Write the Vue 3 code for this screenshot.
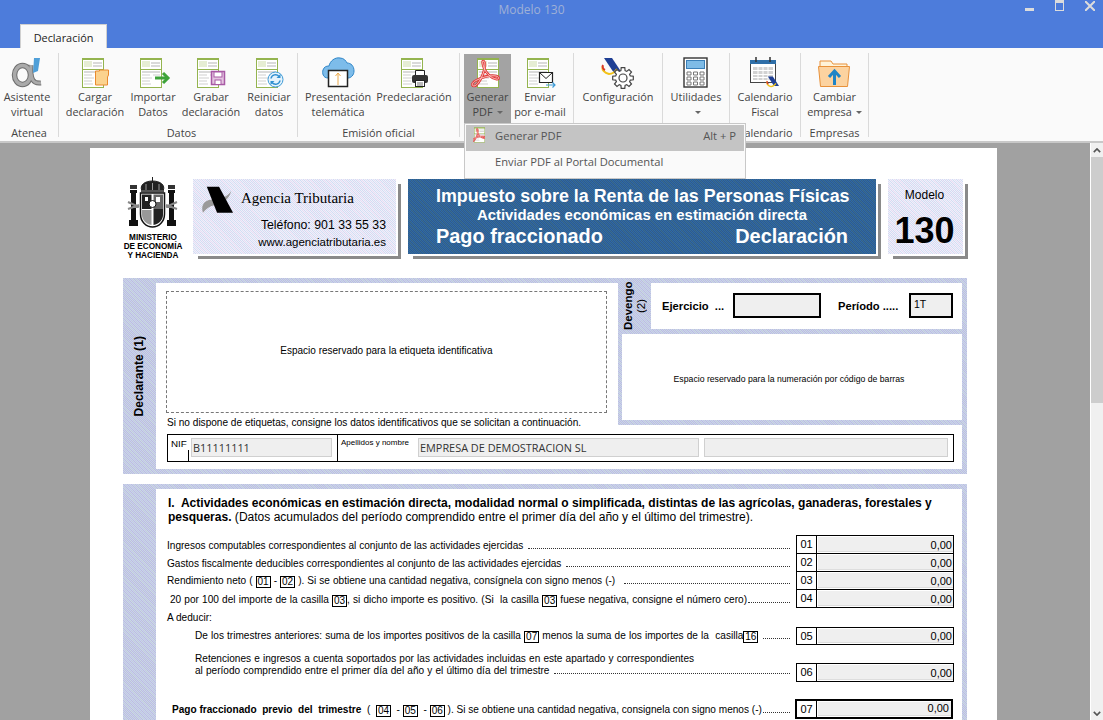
<template>
  <div class="app">
    <svg class="defs" width="0" height="0" aria-hidden="true">
      <defs>
        <symbol id="doc" viewBox="0 0 40 32">
          <rect x="9.5" y="1.5" width="21" height="29" fill="#fff" stroke="#94b44f" />
          <rect x="9" y="1" width="22" height="2" fill="#94b44f" />
          <rect x="11" y="4" width="8" height="6" fill="#e6edd4" />
          <path d="M20 6h9M20 9h9M11 15h18" stroke="#b5b5b5" />
          <path d="M11 18h8M22 18h7M11 21h10M11 24h8M11 27h9" stroke="#cfcfcf" />
          <rect x="9" y="12" width="22" height="1" fill="#94b44f" />
        </symbol>
        <symbol id="alpha" viewBox="0 0 40 32">
          <ellipse cx="15.500" cy="18" rx="8" ry="9.500" fill="none" stroke="#6e6e6e" stroke-width="5.500" />
          <path d="M24 8C23 22 26 27 34 26" fill="none" stroke="#6e6e6e" stroke-width="5" />
          <ellipse cx="15.500" cy="18" rx="8" ry="9.500" fill="none" stroke="#aaaaaa" stroke-width="3.500" />
          <path d="M24 8C23 22 26 27 34 26" fill="none" stroke="#aaaaaa" stroke-width="3" />
          <path d="M27 1h6l-2 13-5 2z" fill="#4f9fd8" />
        </symbol>
        <symbol id="cargar" viewBox="0 0 40 32">
          <use href="#doc" x="-2" />
          <path d="M20.500 14h4v-1h9v5l-1 2v8h-12z" fill="#fbd28e" stroke="#e98a2e" />
        </symbol>
        <symbol id="importar" viewBox="0 0 40 32">
          <use href="#doc" x="-2" />
          <path d="M22 21h11" stroke="#3ea33a" stroke-width="3" />
          <path d="M30 16l5 5-5 5" fill="none" stroke="#3ea33a" stroke-width="3" />
        </symbol>
        <symbol id="grabar" viewBox="0 0 40 32">
          <use href="#doc" x="-3" />
          <rect x="20.500" y="14.500" width="13" height="13" fill="#e4c4e0" stroke="#a85aa5" stroke-width="1.500" />
          <rect x="23" y="15" width="8" height="5" fill="#fff" stroke="#a85aa5" />
          <rect x="24" y="23" width="6" height="4.500" fill="#fff" stroke="#a85aa5" />
        </symbol>
        <symbol id="reiniciar" viewBox="0 0 40 32">
          <use href="#doc" x="-2" />
          <circle cx="26.500" cy="22.500" r="7.500" fill="#e5f3fc" stroke="#3d9ad6" />
          <path d="M22 21.500a4.500 4.500 0 0 1 8-2M31 23.500a4.500 4.500 0 0 1-8 2" fill="none" stroke="#2f8fd0" stroke-width="1.500" />
          <path d="M31.500 17v4h-4M21.500 28v-4h4" fill="#2f8fd0" />
        </symbol>
        <symbol id="nube" viewBox="0 0 40 32">
          <path d="M10 21C5 21 4 16 5 13c1-3 3-4 6-4 1-5 6-9 11-8 4 0 6 3 7 5 4 0 7 3 7 8 0 4-3 7-6 7z" fill="#7dbcea" stroke="#2f86c8" />
          <rect x="10.500" y="13.500" width="19" height="16" fill="#fff" stroke="#222" stroke-width="1.500" />
          <path d="M20 28V16M17.500 19l2.500-3 2.500 3" fill="none" stroke="#eba94a" />
        </symbol>
        <symbol id="imprimir" viewBox="0 0 40 32">
          <use href="#doc" x="-2" />
          <path d="M21.500 13.500h9v6h-9z" fill="#fff" stroke="#222" />
          <rect x="18" y="18" width="16" height="8" rx="2" fill="#333" />
          <rect x="21.500" y="23.500" width="9" height="6" fill="#fff" stroke="#222" />
          <path d="M23 26h6M23 28h6" stroke="#777" />
        </symbol>
        <symbol id="pdf" viewBox="0 0 40 32">
          <use href="#doc" />
          <path d="M15 4c3 0 2 8 0 13-2 5-6 12-9 12-3 0-2-4 3-6 6-3 14-5 19-4 4 1 3 4 0 3-5-1-10-6-12-11-1-3-2-7-1-7z" fill="none" stroke="#e23a3a" stroke-width="2.600" />
          <path d="M15 4c3 0 2 8 0 13-2 5-6 12-9 12-3 0-2-4 3-6 6-3 14-5 19-4 4 1 3 4 0 3-5-1-10-6-12-11-1-3-2-7-1-7z" fill="none" stroke="#f9c9c4" stroke-width=".9" />
        </symbol>
        <symbol id="enviar" viewBox="0 0 40 32">
          <use href="#doc" x="-2" />
          <path d="M19.500 15.500h13v10h-13z" fill="#fff" stroke="#222" stroke-width="1.200" />
          <path d="M19.500 15.500l6.500 6 6.500-6" fill="none" stroke="#222" />
          <path d="M26 28h9M32.500 25.500l2.500 2.500-2.500 2.500" fill="none" stroke="#3d9ad6" stroke-width="1.200" />
        </symbol>
        <symbol id="aeat" viewBox="0 0 40 32">
          <path d="M3 1h8l10 15h-8z" fill="#1f3f94" />
          <path d="M2 9c-2 4 2 7 6 8 3 0 6-2 8-5" fill="none" stroke="#f2c318" stroke-width="2" />
          <path d="M2 8c-1 2 0 4 2 5" fill="none" stroke="#d8382c" stroke-width="2" />
        </symbol>
        <symbol id="config" viewBox="0 0 40 32">
          <use href="#aeat" x="3" />
          <path :d="gearPath" fill="#fff" stroke="#444" stroke-width="1.200" />
          <circle cx="25" cy="21" r="4" fill="#fff" stroke="#444" stroke-width="1.200" />
        </symbol>
        <symbol id="calc" viewBox="0 0 40 32">
          <rect x="8" y="1" width="23" height="29" fill="#fff" stroke="#333" stroke-width="1.400" />
          <rect x="10.500" y="3.500" width="18" height="8" fill="#7ebbe6" stroke="#3a7fb8" />
          <path d="M11 15h4v3h-4zM17.500 15h4v3h-4zM24 15h4v3h-4zM11 20h4v3h-4zM17.500 20h4v3h-4zM24 20h4v3h-4zM11 25h4v3h-4zM17.500 25h4v3h-4zM24 25h4v3h-4z" fill="#fff" stroke="#777" />
        </symbol>
        <symbol id="calendario" viewBox="0 0 40 32">
          <rect x="5.500" y="3.500" width="25" height="22" fill="#fff" stroke="#444" />
          <rect x="5" y="3" width="26" height="4" fill="#2f6fa8" />
          <path d="M11 0v5M25 0v5" stroke="#333" stroke-width="1.500" />
          <path d="M8 10h20v13H8z" fill="#d2d2d2" />
          <path d="M8 13.500h20M8 17.500h20M8 20.500h20M13 10v13M18 10v13M23 10v13" stroke="#fff" />
          <g transform="translate(21 19) scale(.62)"><use href="#aeat" width="40" height="32" /></g>
        </symbol>
        <symbol id="carpeta" viewBox="0 0 40 32">
          <path d="M5 9V4h11l2 3h14v3" fill="#fff3d8" stroke="#e8913a" />
          <path d="M3.500 9.500h31l-2 20h-27z" fill="#fcd3a0" stroke="#e8913a" />
          <path d="M19.500 28V14M14 20l5.500-6 5.500 6" fill="none" stroke="#1f84c6" stroke-width="3" />
        </symbol>
        <symbol id="escudo" viewBox="0 0 52 52">
          <path d="M25.500 0v5M15 14c-3-6 3-10 10.500-10S39 8 36 14z" fill="#222" stroke="#222" />
          <path d="M19 7v6M25.500 6v7M32 7v6" stroke="#999" />
          <rect x="14" y="13" width="23" height="2.500" fill="#555" />
          <path d="M13.500 16h24v21c0 8-6 13-12 13s-12-5-12-13z" fill="#fff" stroke="#111" stroke-width="1.500" />
          <path d="M15 17.500h9.500V32H15zM26.500 32H36v6c0 5-4 9-9.500 10z" fill="#222" />
          <path d="M26.500 17.500H36V32h-9.500z" fill="#666" />
          <path d="M15 33h9.500v15C19 47 15 43 15 38z" fill="#999" />
          <path d="M18 20h3v4h-3zM29 20h4v5h-4z" fill="#fff" />
          <circle cx="25.500" cy="27" r="3.500" fill="#fff" stroke="#111" />
          <path d="M3 13h7v3H9v27h2v6H2v-6h2V16H3zM41 13h7v3h-1v27h2v6h-9v-6h2V16h-1z" fill="#111" />
          <path d="M3 8h7v4H3zM41 8h7v4h-7z" fill="#333" />
          <path d="M1 25l11 5M1 32l11-4M39 30l11-5M39 28l11 4" stroke="#888" stroke-width="2" />
        </symbol>
        <symbol id="at" viewBox="0 0 34 30">
          <path d="M31 5C29 14 21 19 13 20 8 21 4 24 1 28-2 19 4 14 12 14c8 0 15-3 19-9z" fill="#9a9a9a" />
          <path d="M5 0h13l15 28H16z" fill="#000" />
        </symbol>
      </defs>
    </svg>

    <header class="titlebar">
      <div class="title">Modelo 130</div>
      <div class="winbtns">
        <span class="minim"></span>
        <span class="maxim"></span>
        <svg class="close" viewBox="0 0 10 10"><path d="M0 0l10 10M10 0L0 10" stroke="#dcdcdc" stroke-width="2" /></svg>
      </div>
      <div class="tab">Declaración</div>
    </header>

    <nav class="ribbon">
      <section v-for="g in groups" :key="g.id" class="group" :class="g.id">
        <div class="items">
          <div v-for="it in g.items" :key="it.icon" class="item" :class="[it.cls, { active: it.active }]">
            <svg class="ico" viewBox="0 0 40 32"><use :href="'#' + it.icon" /></svg>
            <span v-for="(l, i) in it.lines" :key="i" class="lbl">{{ l }}<i v-if="it.caret && i === 1" class="caret"></i></span>
          </div>
        </div>
        <div class="glabel">{{ g.label }}</div>
      </section>
      <div class="menu">
        <div class="mi sel">
          <svg class="mi-ico" viewBox="7 0 24 32"><use href="#pdf" width="40" height="32" /></svg>
          <span>Generar PDF</span>
          <span class="short">Alt + P</span>
        </div>
        <div class="mi"><span class="mi-ind">Enviar PDF al Portal Documental</span></div>
      </div>
    </nav>

    <main class="work">
      <div class="viewer">
        <div class="page">
          <div class="head">
            <div class="min">
              <svg class="escudo" viewBox="0 0 52 52"><use href="#escudo" /></svg>
              <div>MINISTERIO<br />DE ECONOMÍA<br />Y HACIENDA</div>
            </div>
            <div class="at dith-light">
              <div class="at-top">
                <svg class="at-logo" viewBox="0 0 34 30"><use href="#at" /></svg>
                <span class="at-name">Agencia Tributaria</span>
              </div>
              <div class="at-tel">Teléfono: 901 33 55 33</div>
              <div class="at-web">www.agenciatributaria.es</div>
            </div>
            <div class="blue">
              <div class="b1">Impuesto sobre la Renta de las Personas Físicas</div>
              <div class="b2">Actividades económicas en estimación directa</div>
              <div class="b3"><span>Pago fraccionado</span><span>Declaración</span></div>
            </div>
            <div class="modelo dith-light">
              <div class="m1">Modelo</div>
              <div class="m2">130</div>
            </div>
          </div>

          <section class="sec dith sec1">
            <div class="side"><b>Declarante (1)</b></div>
            <div class="body1">
              <div class="etiq">
                <div class="dashed">Espacio reservado para la etiqueta identificativa</div>
                <div class="hint">Si no dispone de etiquetas, consigne los datos identificativos que se solicitan a continuación.</div>
              </div>
              <div class="right dith">
                <div class="dev">
                  <div class="dev-side"><b>Devengo</b><span>(2)</span></div>
                  <div class="dev-body">
                    <span class="ej">Ejercicio &nbsp;...</span>
                    <div class="inp inp-ej"></div>
                    <span class="per">Período .....</span>
                    <div class="inp inp-per">1T</div>
                  </div>
                </div>
                <div class="barcode">Espacio reservado para la numeración por código de barras</div>
              </div>
              <div class="nif">
                <div class="nif-a">
                  <span class="nif-l">NIF</span>
                  <div class="fld fld-nif">B11111111</div>
                </div>
                <div class="nif-b">
                  <span class="ape">Apellidos y nombre</span>
                  <div class="fld fld-nom">EMPRESA DE DEMOSTRACION SL</div>
                  <div class="fld fld-ext"></div>
                </div>
              </div>
            </div>
          </section>

          <section class="sec dith sec2">
            <div class="side"></div>
            <div class="body2">
              <div class="h1">
                <div><b>I.&nbsp; Actividades económicas en estimación directa, modalidad normal o simplificada, distintas de las agrícolas, ganaderas, forestales y</b></div>
                <div><b>pesqueras.</b> (Datos acumulados del período comprendido entre el primer día del año y el último del trimestre).</div>
              </div>

              <div class="row r01">
                <div class="txt"><span>Ingresos computables correspondientes al conjunto de las actividades ejercidas</span><i class="dots"></i></div>
                <div class="box"><span class="code">01</span><span class="val">0,00</span></div>
              </div>
              <div class="row">
                <div class="txt"><span>Gastos fiscalmente deducibles correspondientes al conjunto de las actividades ejercidas</span><i class="dots"></i></div>
                <div class="box"><span class="code">02</span><span class="val">0,00</span></div>
              </div>
              <div class="row">
                <div class="txt t3"><span>Rendimiento neto ( <em class="cas">01</em> - <em class="cas">02</em> ). Si se obtiene una cantidad negativa, consígnela con signo menos (-)</span><i class="dots gap"></i></div>
                <div class="box"><span class="code">03</span><span class="val">0,00</span></div>
              </div>
              <div class="row">
                <div class="txt t4"><span>20 por 100 del importe de la casilla <em class="cas">03</em>, si dicho importe es positivo. (Si &nbsp;la casilla <em class="cas">03</em> fuese negativa, consigne el número cero)</span><i class="dots tight"></i></div>
                <div class="box"><span class="code">04</span><span class="val">0,00</span></div>
              </div>
              <div class="ded">A deducir:</div>
              <div class="row r05">
                <div class="txt ind"><span>De los trimestres anteriores: suma de los importes positivos de la casilla <em class="cas">07</em> menos la suma de los importes de la &nbsp;casilla<em class="cas">16</em></span><i class="dots"></i></div>
                <div class="box"><span class="code">05</span><span class="val">0,00</span></div>
              </div>
              <div class="row r06">
                <div class="txt ind two">
                  <div>Retenciones e ingresos a cuenta soportados por las actividades incluidas en este apartado y correspondientes</div>
                  <div class="ln2"><span>al período comprendido entre el primer día del año y el último día del trimestre</span><i class="dots"></i></div>
                </div>
                <div class="box"><span class="code">06</span><span class="val">0,00</span></div>
              </div>
              <div class="row r07">
                <div class="txt t7"><span><b>Pago fraccionado &nbsp;previo &nbsp;del &nbsp;trimestre</b> &nbsp;( &nbsp;<em class="cas">04</em> &nbsp;- <em class="cas">05</em> &nbsp;- <em class="cas">06</em> ). Si se obtiene una cantidad negativa, consignela con signo menos (-)</span><i class="dots tight"></i></div>
                <div class="box thick"><span class="code">07</span><span class="val">0,00</span></div>
              </div>
            </div>
          </section>
        </div>
      </div>
      <aside class="scroll">
        <div class="sb-btn"><svg viewBox="0 0 10 6"><path d="M1 5l4-4 4 4" fill="none" stroke="#555" stroke-width="2" /></svg></div>
        <div class="thumb"></div>
        <div class="track"></div>
        <div class="sb-btn"><svg viewBox="0 0 10 6"><path d="M1 1l4 4 4-4" fill="none" stroke="#555" stroke-width="2" /></svg></div>
      </aside>
    </main>
  </div>
</template>

<script setup>
const groups = [
  { id: 'g-atenea', label: 'Atenea', items: [{ icon: 'alpha', lines: ['Asistente', 'virtual'] }] },
  {
    id: 'g-datos',
    label: 'Datos',
    items: [
      { icon: 'cargar', lines: ['Cargar', 'declaración'] },
      { icon: 'importar', lines: ['Importar', 'Datos'] },
      { icon: 'grabar', lines: ['Grabar', 'declaración'] },
      { icon: 'reiniciar', lines: ['Reiniciar', 'datos'] }
    ]
  },
  {
    id: 'g-emision',
    label: 'Emisión oficial',
    items: [
      { icon: 'nube', lines: ['Presentación', 'telemática'], cls: 'w80' },
      { icon: 'imprimir', lines: ['Predeclaración'], cls: 'w72' }
    ]
  },
  {
    id: 'g-pdf',
    label: '',
    items: [
      { icon: 'pdf', lines: ['Generar', 'PDF'], caret: true, active: true, cls: 'w47' },
      { icon: 'enviar', lines: ['Enviar', 'por e-mail'], cls: 'w58' }
    ]
  },
  { id: 'g-config', label: '', items: [{ icon: 'config', lines: ['Configuración'], cls: 'w88' }] },
  { id: 'g-util', label: '', items: [{ icon: 'calc', lines: ['Utilidades', ''], caret: true, cls: 'w66' }] },
  { id: 'g-cal', label: 'Calendario', items: [{ icon: 'calendario', lines: ['Calendario', 'Fiscal'], cls: 'w70' }] },
  { id: 'g-emp', label: 'Empresas', items: [{ icon: 'carpeta', lines: ['Cambiar', 'empresa'], caret: true, cls: 'w67' }] }
]

// 8 tooth gear around the middle of the Configuración icon
const gearPath = (() => {
  const pts = []
  for (let i = 0; i < 8; i++) {
    const a = (i * Math.PI) / 4
    for (const [d, r] of [[-0.28, 7.6], [-0.17, 10.4], [0.17, 10.4], [0.28, 7.6]]) {
      pts.push(`${(25 + r * Math.cos(a + d)).toFixed(1)} ${(21 + r * Math.sin(a + d)).toFixed(1)}`)
    }
  }
  return 'M' + pts.join('L') + 'z'
})()
</script>

<style>
html, body { margin: 0; overflow: hidden; }
</style>

<style scoped>
.app {
  width: 1103px;
  height: 720px;
  overflow: hidden;
  display: flex;
  flex-direction: column;
  font-family: "Open Sans", "Noto Sans", sans-serif;
}
.defs { position: absolute; }

.titlebar {
  position: relative;
  height: 48px;
  flex: none;
  background: #4d7cdb;
}
.title {
  text-align: center;
  padding-top: 2px;
  font-size: 12px;
  line-height: 16px;
  color: #9fb0d6;
  margin-left: -40px;
}
.winbtns {
  position: absolute;
  top: 1px;
  right: 8px;
  display: flex;
  align-items: flex-end;
  gap: 21px;
  height: 10px;
}
.minim { width: 9px; height: 3px; background: #dcdcdc; }
.maxim { width: 7px; height: 7px; border: 1px solid #dcdcdc; border-top-width: 3px; }
.close { width: 10px; height: 10px; }
.tab {
  position: absolute;
  left: 20px;
  bottom: 0;
  width: 87px;
  height: 24px;
  box-sizing: border-box;
  padding-top: 5px;
  text-align: center;
  font-size: 10.900px;
  line-height: 16px;
  color: #222;
  background: #fafafa;
  border: 1px solid #d0d0d0;
  border-bottom: 0;
}

.ribbon {
  position: relative;
  flex: none;
  height: 93px;
  display: flex;
  background: #fafafa;
  border-bottom: 2px solid #c8c8c8;
  font-size: 10.900px;
  color: #444;
}
.group {
  margin-top: 5px;
  height: 84px;
  box-sizing: border-box;
  border-right: 1px solid #dadada;
  display: flex;
  flex-direction: column;
}
.items { display: flex; height: 70px; }
.item {
  margin-top: 1px;
  width: 58px;
  height: 69px;
  padding-top: 3px;
  box-sizing: border-box;
  display: flex;
  flex-direction: column;
  align-items: center;
  flex: none;
}
.item.active { background: #a3a3a3; }
.ico { width: 40px; height: 32px; flex: none; }
.lbl { line-height: 15px; height: 15px; white-space: nowrap; }
.glabel { text-align: center; line-height: 15px; margin-top: 2px; white-space: nowrap; }
.caret {
  display: inline-block;
  margin-left: 4px;
  vertical-align: 2px;
  border: 3px solid transparent;
  border-top-color: #666;
  border-bottom-width: 0;
}
.g-atenea { width: 59px; }
.g-atenea .item { width: 54px; }
.g-datos { width: 239px; padding-left: 7px; }
.g-emision { width: 162px; }
.g-pdf { width: 114px; padding-left: 4px; }
.g-config { width: 89px; }
.g-util { width: 67px; }
.g-cal { width: 71px; }
.g-emp { width: 68px; }
.item.w80 { width: 80px; }
.item.w72 { width: 72px; }
.item.w47 { width: 47px; }
.item.w58 { width: 58px; }
.item.w88 { width: 88px; }
.item.w66 { width: 66px; }
.item.w70 { width: 70px; }
.item.w67 { width: 67px; }

.menu {
  position: absolute;
  left: 464px;
  top: 75px;
  width: 282px;
  height: 56px;
  box-sizing: border-box;
  padding: 1px;
  background: #fafafa;
  border: 1px solid #c8c8c8;
  font-size: 11.200px;
  color: #555;
}
.mi {
  height: 26px;
  box-sizing: border-box;
  padding: 0 8px 6px 0;
  display: flex;
  align-items: center;
}
.mi.sel { background: #c4c4c4; }
.mi-ico { width: 12px; height: 16px; margin: 0 10px 0 7px; flex: none; }
.mi-ind { padding-left: 29px; }
.short { margin-left: auto; }

.work { flex: 1; display: flex; min-height: 0; background: #a1a1a1; }
.viewer { flex: 1; padding: 5px 0 0 90px; overflow: hidden; }
.scroll {
  width: 12px;
  flex: none;
  display: flex;
  flex-direction: column;
  background: #f0f0f0;
  border-left: 1px solid #fff;
}
.sb-btn { height: 14px; display: flex; align-items: center; justify-content: center; flex: none; }
.sb-btn svg { width: 8px; height: 5px; }
.thumb { height: 246px; background: #cdcdcd; flex: none; }
.track { flex: 1; }

.page {
  width: 907px;
  height: 600px;
  box-sizing: border-box;
  padding-top: 31px;
  background: #fff;
  font-family: "Liberation Sans", Arial, sans-serif;
  color: #000;
}
/* the form is a scan, so its tints are dithered rather than flat */
.dith {
  background:
    repeating-linear-gradient(45deg, rgba(205, 230, 215, .35) 0 1px, transparent 1px 3px),
    repeating-conic-gradient(#c6d0f0 0 25%, #bfbfdc 0 50%) 0 0 / 2px 2px;
}
.dith-light {
  background:
    repeating-linear-gradient(45deg, rgba(250, 225, 245, .45) 0 1px, transparent 1px 3px),
    repeating-conic-gradient(#eef1fb 0 25%, #d3dcf2 0 50%) 0 0 / 2px 2px;
}

.head { display: flex; height: 99px; padding-left: 33px; }
.min {
  width: 60px;
  margin-top: -2px;
  text-align: center;
  font-size: 8.200px;
  line-height: 9px;
  font-weight: 700;
  white-space: nowrap;
}
.escudo { display: block; width: 52px; height: 52px; margin: 0 auto 4px; }
.at {
  margin-left: 10px;
  width: 203px;
  height: 75px;
  box-sizing: border-box;
  padding: 7px 10px 0 9px;
  box-shadow: 2px 2px 0 #fff, 5px 5px 0 #8a8a8a;
  text-align: right;
}
.at-top { display: flex; align-items: flex-start; }
.at-logo { width: 32px; height: 29px; flex: none; }
.at-name { margin-left: 7px; font: 15px/24px "Liberation Serif", serif; white-space: nowrap; }
.at-tel { margin-top: 2px; font-size: 12.300px; line-height: 17px; }
.at-web { font-size: 11.500px; line-height: 16px; white-space: nowrap; }
.blue {
  margin-left: 12px;
  width: 468px;
  height: 75px;
  box-sizing: border-box;
  padding: 7px 28px 0 28px;
  background:
    repeating-linear-gradient(45deg, rgba(70, 110, 110, .3) 0 1px, transparent 1px 3px),
    repeating-conic-gradient(#2e6ba6 0 25%, #2f5a90 0 50%) 0 0 / 2px 2px;
  box-shadow: 2px 2px 0 #fff, 5px 5px 0 #8a8a8a;
  color: #fff;
  font-weight: 700;
  text-align: center;
  white-space: nowrap;
}
.b1 { font-size: 17.850px; line-height: 20px; }
.b2 { font-size: 14.900px; line-height: 18px; }
.b3 { display: flex; justify-content: space-between; font-size: 19.900px; line-height: 25px; }
.modelo {
  margin-left: 12px;
  width: 75px;
  height: 75px;
  box-shadow: 2px 2px 0 #fff, 5px 5px 0 #8a8a8a;
  text-align: center;
  box-sizing: border-box;
  padding-right: 2px;
}
.m1 { font-size: 12px; line-height: 14px; padding-top: 9px; }
.m2 { font-size: 36px; font-weight: 700; line-height: 44px; margin-top: 7px; }

.sec {
  margin-left: 33px;
  width: 844px;
  box-sizing: border-box;
  display: flex;
  padding: 5px 5px 5px 0;
}
.sec1 { height: 196px; }
.sec2 { margin-top: 10px; height: 300px; padding-bottom: 0; }
.side {
  width: 32px;
  padding-right: 1px;
  flex: none;
  display: flex;
  align-items: center;
  justify-content: center;
}
.side b { writing-mode: vertical-rl; transform: rotate(180deg); font-size: 12.200px; white-space: nowrap; }

.body1 {
  flex: 1;
  background: #fff;
  display: grid;
  grid-template-columns: 462px 344px;
  grid-template-rows: auto 1fr;
}
.etiq { padding: 8px 0 0 10px; }
.dashed {
  width: 441px;
  height: 122px;
  box-sizing: border-box;
  padding-bottom: 3px;
  border: 1px dashed #777;
  display: flex;
  align-items: center;
  justify-content: center;
  font-size: 10px;
}
.hint { font-size: 10.080px; line-height: 14px; margin: 3px -20px 0 1px; white-space: nowrap; }
.right { height: 142px; }
.dev { display: flex; height: 46px; }
.dev-side {
  width: 33px;
  flex: none;
  display: flex;
  flex-direction: column;
  align-items: center;
  justify-content: center;
  writing-mode: vertical-rl;
  transform: rotate(180deg);
  font-size: 11.500px;
  line-height: 13px;
  white-space: nowrap;
}
.dev-body {
  flex: 1;
  background: #fff;
  display: flex;
  align-items: center;
  box-sizing: border-box;
  padding: 0 0 1px 11px;
  font-size: 11.200px;
  font-weight: 700;
  white-space: nowrap;
}
.ej { width: 71px; }
.per { width: 71px; margin-left: 17px; }
.inp {
  height: 25px;
  box-sizing: border-box;
  border: 2px solid #000;
  background: #efefef;
}
.inp-ej { width: 88px; }
.inp-per { width: 44px; font-size: 10.500px; font-weight: 400; line-height: 18px; padding-left: 3px; }
.barcode {
  margin: 5px 0 0 4px;
  height: 86px;
  box-sizing: border-box;
  padding: 3px 6px 0 0;
  background: #fff;
  display: flex;
  align-items: center;
  justify-content: center;
  font-size: 8.700px;
}
.nif {
  grid-column: 1 / 3;
  margin: 4px 0 0 11px;
  width: 787px;
  height: 28px;
  box-sizing: border-box;
  border: 1px solid #000;
  display: flex;
}
.nif-a { width: 170px; box-sizing: border-box; flex: none; display: flex; border-right: 1px solid #000; position: relative; }
.nif-a::after { content: ""; position: absolute; left: 20px; bottom: 0; width: 1px; height: 11px; background: #000; }
.nif-b { flex: 1; display: flex; padding-left: 3px; }
.nif-l { width: 21px; padding: 1px 0 0 3px; box-sizing: border-box; font-size: 9.800px; line-height: 15px; flex: none; }
.fld {
  margin-top: 3px;
  height: 19px;
  box-sizing: border-box;
  background: #efefef;
  border: 1px solid #d0d0d0;
  font: 10.900px/17px "Open Sans", sans-serif;
  color: #333;
  padding-left: 1px;
}
.fld-nif { width: 141px; margin-left: 2px; }
.ape { width: 77px; flex: none; font-size: 8px; line-height: 15px; white-space: nowrap; }
.fld-nom { width: 281px; }
.fld-ext { width: 244px; margin-left: 5px; }

.body2 { flex: 1; background: #fff; padding-left: 11px; }
.h1 {
  margin: 7px 0 0;
  padding-left: 1px;
  font-size: 12.040px;
  line-height: 14px;
  white-space: nowrap;
}
.row { display: flex; align-items: flex-end; height: 18px; width: 787px; font-size: 10.080px; }
.r01 { margin-top: 12px; }
.txt { flex: 1; min-width: 0; display: flex; align-items: baseline; padding: 0 6px 2px 0; line-height: 13px; white-space: nowrap; overflow: hidden; }
.dots { flex: 1; height: 1px; min-width: 0; margin-left: 5px; border-bottom: 1px dotted #333; }
.dots.gap { margin-left: 9px; }
.dots.tight { margin-left: 1px; }
.t3 { word-spacing: .2px; }
.t4 { padding-left: 3px; padding-bottom: 1px; word-spacing: .35px; }
.ind { padding-left: 28px; word-spacing: .35px; }
.two { display: block; padding-bottom: 5px; line-height: 12px; overflow: visible; }
.ln2 { display: flex; align-items: baseline; }
.t7 { padding-left: 5px; padding-bottom: 2px; }
.cas {
  display: inline-block;
  font-style: normal;
  border: 1px solid #000;
  min-width: 15px;
  padding: 0 1px;
  box-sizing: border-box;
  height: 12px;
  line-height: 10px;
  font-size: 10px;
  text-align: center;
  vertical-align: -1px;
}
.box {
  width: 158px;
  height: 19px;
  box-sizing: border-box;
  border: 1px solid #000;
  flex: none;
  display: flex;
  font-size: 11px;
  line-height: 17px;
}
.code { width: 20px; border-right: 1px solid #000; box-sizing: border-box; text-align: center; flex: none; }
.val { flex: 1; background: #efefef; margin: 1px 0 1px 1px; text-align: right; padding-right: 1px; line-height: 17px; border-bottom: 1px solid #ddd; }
.ded { height: 19px; line-height: 20px; font-size: 10.080px; }
.r05 .box { height: 18px; }
.r05 .val { line-height: 15px; }
.r06 { margin-top: 18px; height: 19px; }
.r07 { margin-top: 17px; height: 20px; }
.thick { height: 20px; border-width: 2px; margin-left: -1px; margin-right: 1px; }
.thick .val { line-height: 13px; padding-right: 2px; }
</style>
